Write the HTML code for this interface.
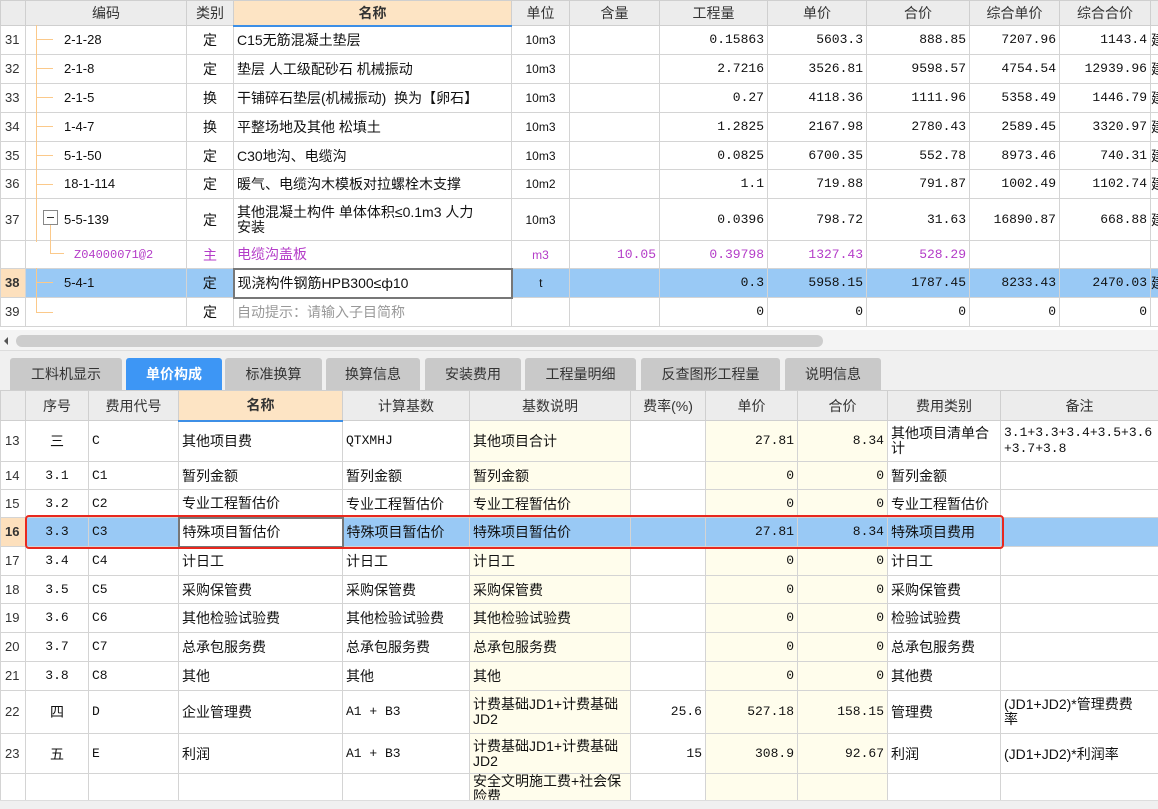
<!DOCTYPE html>
<html><head><meta charset="utf-8"><style>
*{margin:0;padding:0;box-sizing:border-box}
body{width:1158px;height:809px;overflow:hidden;background:#fff;font-family:"Liberation Sans","Noto Sans CJK SC",sans-serif;font-size:14px;color:#111;position:relative}
table{border-collapse:collapse;table-layout:fixed;position:absolute;left:0}
td{border:1px solid #d4d4d4;padding:0 3px;white-space:nowrap;overflow:hidden;vertical-align:middle;line-height:16px}
.h td{background:#ececec;text-align:center;color:#333;border-color:#cfcfcf}
.h td.nm{background:#fde4c4;font-weight:bold;border-bottom:2px solid #3d8fe6}
.n{font-family:"Liberation Mono",monospace;font-size:13px;text-align:right}
.c{text-align:center}
.rn{font-size:13px;color:#333;padding-left:4px}
.sel td{background:#99c9f5}
.sel td.rn{background:#fde0bd;font-weight:bold}
.pur{color:#b43cc8}
.y{background:#fffdec}
.gray{color:#999}
.wrap{white-space:normal;line-height:15px}
.ln{position:absolute;background:#fbc98a;z-index:2}
.tab{position:absolute;top:358px;height:32px;background:#c9c9c9;color:#333;text-align:center;line-height:32px;font-size:14px;border-radius:3px 3px 0 0}
</style></head><body>
<table style="top:0;width:1158px">
<colgroup><col width=25><col width=161><col width=47><col width=278><col width=58><col width=90><col width=108><col width=99><col width=103><col width=90><col width=91><col width=8></colgroup>
<tr class="h" style="height:25px"><td></td><td>编码</td><td>类别</td><td class="nm">名称</td><td>单位</td><td>含量</td><td>工程量</td><td>单价</td><td>合价</td><td>综合单价</td><td>综合合价</td><td></td></tr>
<tr style="height:29px"><td class="rn">31</td><td style="padding-left:38px;font-size:13px">2-1-28</td><td class="c">定</td><td>C15无筋混凝土垫层</td><td class="c" style="font-size:12px">10m3</td><td></td><td class="n">0.15863</td><td class="n">5603.3</td><td class="n">888.85</td><td class="n">7207.96</td><td class="n">1143.4</td><td style="padding:0">建</td></tr>
<tr style="height:29px"><td class="rn">32</td><td style="padding-left:38px;font-size:13px">2-1-8</td><td class="c">定</td><td>垫层 人工级配砂石 机械振动</td><td class="c" style="font-size:12px">10m3</td><td></td><td class="n">2.7216</td><td class="n">3526.81</td><td class="n">9598.57</td><td class="n">4754.54</td><td class="n">12939.96</td><td style="padding:0">建</td></tr>
<tr style="height:29px"><td class="rn">33</td><td style="padding-left:38px;font-size:13px">2-1-5</td><td class="c">换</td><td>干铺碎石垫层(机械振动) &nbsp;换为【卵石】</td><td class="c" style="font-size:12px">10m3</td><td></td><td class="n">0.27</td><td class="n">4118.36</td><td class="n">1111.96</td><td class="n">5358.49</td><td class="n">1446.79</td><td style="padding:0">建</td></tr>
<tr style="height:29px"><td class="rn">34</td><td style="padding-left:38px;font-size:13px">1-4-7</td><td class="c">换</td><td>平整场地及其他 松填土</td><td class="c" style="font-size:12px">10m3</td><td></td><td class="n">1.2825</td><td class="n">2167.98</td><td class="n">2780.43</td><td class="n">2589.45</td><td class="n">3320.97</td><td style="padding:0">建</td></tr>
<tr style="height:28px"><td class="rn">35</td><td style="padding-left:38px;font-size:13px">5-1-50</td><td class="c">定</td><td>C30地沟、电缆沟</td><td class="c" style="font-size:12px">10m3</td><td></td><td class="n">0.0825</td><td class="n">6700.35</td><td class="n">552.78</td><td class="n">8973.46</td><td class="n">740.31</td><td style="padding:0">建</td></tr>
<tr style="height:29px"><td class="rn">36</td><td style="padding-left:38px;font-size:13px">18-1-114</td><td class="c">定</td><td>暖气、电缆沟木模板对拉螺栓木支撑</td><td class="c" style="font-size:12px">10m2</td><td></td><td class="n">1.1</td><td class="n">719.88</td><td class="n">791.87</td><td class="n">1002.49</td><td class="n">1102.74</td><td style="padding:0">建</td></tr>
<tr style="height:42px"><td class="rn">37</td><td style="padding-left:38px;font-size:13px">5-5-139</td><td class="c">定</td><td class="wrap">其他混凝土构件 单体体积≤0.1m3 人力<br>安装</td><td class="c" style="font-size:12px">10m3</td><td></td><td class="n">0.0396</td><td class="n">798.72</td><td class="n">31.63</td><td class="n">16890.87</td><td class="n">668.88</td><td style="padding:0">建</td></tr>
<tr style="height:28px" class="pur"><td></td><td style="padding-left:48px;font-family:'Liberation Mono',monospace;font-size:12px">Z04000071@2</td><td class="c">主</td><td>电缆沟盖板</td><td class="c" style="font-size:12px">m3</td><td class="n">10.05</td><td class="n">0.39798</td><td class="n">1327.43</td><td class="n">528.29</td><td></td><td></td><td></td></tr>
<tr style="height:29px" class="sel"><td class="rn">38</td><td style="padding-left:38px;font-size:13px">5-4-1</td><td class="c">定</td><td style="background:#fff;border:2px solid #777">现浇构件钢筋HPB300≤ф10</td><td class="c" style="font-size:12px">t</td><td></td><td class="n">0.3</td><td class="n">5958.15</td><td class="n">1787.45</td><td class="n">8233.43</td><td class="n">2470.03</td><td style="padding:0">建</td></tr>
<tr style="height:29px"><td class="rn">39</td><td></td><td class="c">定</td><td class="gray">自动提示：请输入子目简称</td><td></td><td></td><td class="n">0</td><td class="n">0</td><td class="n">0</td><td class="n">0</td><td class="n">0</td><td></td></tr>
</table>
<div class="ln" style="left:36px;top:25px;width:1px;height:217px"></div>
<div class="ln" style="left:36px;top:268px;width:1px;height:45px"></div>
<div class="ln" style="left:36px;top:39px;width:17px;height:1px"></div>
<div class="ln" style="left:36px;top:68px;width:17px;height:1px"></div>
<div class="ln" style="left:36px;top:97px;width:17px;height:1px"></div>
<div class="ln" style="left:36px;top:126px;width:17px;height:1px"></div>
<div class="ln" style="left:36px;top:155px;width:17px;height:1px"></div>
<div class="ln" style="left:36px;top:184px;width:17px;height:1px"></div>
<div class="ln" style="left:36px;top:282px;width:17px;height:1px"></div>
<div class="ln" style="left:36px;top:312px;width:17px;height:1px"></div>
<div style="position:absolute;z-index:3;left:43px;top:210px;width:15px;height:15px;border:1px solid #888;background:#fff"><div style="position:absolute;left:3px;top:6px;width:7px;height:1px;background:#333"></div></div>
<div class="ln" style="left:50px;top:225px;width:1px;height:29px"></div>
<div class="ln" style="left:50px;top:253px;width:14px;height:1px"></div>
<div style="position:absolute;left:0;top:330px;width:1158px;height:20px;background:#f4f4f4"></div>
<div style="position:absolute;left:4px;top:337px;width:0;height:0;border-top:4px solid transparent;border-bottom:4px solid transparent;border-right:4px solid #555"></div>
<div style="position:absolute;left:16px;top:335px;width:807px;height:12px;background:#cdcdcd;border-radius:6px"></div>
<div style="position:absolute;left:0;top:350px;width:1158px;height:40px;background:#f0f0f0;border-top:1px solid #ddd"></div>
<div class="tab" style="left:10px;width:112px">工料机显示</div>
<div class="tab" style="left:126px;width:96px;background:#3d96f5;color:#fff;font-weight:bold">单价构成</div>
<div class="tab" style="left:225px;width:97px">标准换算</div>
<div class="tab" style="left:326px;width:94px">换算信息</div>
<div class="tab" style="left:425px;width:96px">安装费用</div>
<div class="tab" style="left:525px;width:111px">工程量明细</div>
<div class="tab" style="left:641px;width:139px">反查图形工程量</div>
<div class="tab" style="left:785px;width:96px">说明信息</div>
<table style="top:390px;width:1158px">
<colgroup><col width=25><col width=63><col width=90><col width=164><col width=127><col width=161><col width=75><col width=92><col width=90><col width=113><col width=158></colgroup>
<tr class="h" style="height:30px"><td></td><td>序号</td><td>费用代号</td><td class="nm">名称</td><td>计算基数</td><td>基数说明</td><td>费率(%)</td><td>单价</td><td>合价</td><td>费用类别</td><td>备注</td></tr>
<tr style="height:41px"><td class="rn">13</td><td class="c">三</td><td class="n" style="text-align:left">C</td><td>其他项目费</td><td class="n" style="text-align:left">QTXMHJ</td><td class="y">其他项目合计</td><td></td><td class="n y">27.81</td><td class="n y">8.34</td><td class="wrap">其他项目清单合<br>计</td><td class="n" style="text-align:left;line-height:16px">3.1+3.3+3.4+3.5+3.6<br>+3.7+3.8</td></tr>
<tr style="height:28px"><td class="rn">14</td><td class="n" style="text-align:center">3.1</td><td class="n" style="text-align:left">C1</td><td>暂列金额</td><td>暂列金额</td><td class="y">暂列金额</td><td></td><td class="n y">0</td><td class="n y">0</td><td>暂列金额</td><td></td></tr>
<tr style="height:28px"><td class="rn">15</td><td class="n" style="text-align:center">3.2</td><td class="n" style="text-align:left">C2</td><td>专业工程暂估价</td><td>专业工程暂估价</td><td class="y">专业工程暂估价</td><td></td><td class="n y">0</td><td class="n y">0</td><td>专业工程暂估价</td><td></td></tr>
<tr style="height:29px" class="sel"><td class="rn">16</td><td class="n" style="text-align:center">3.3</td><td class="n" style="text-align:left">C3</td><td style="background:#fff;border:2px solid #777">特殊项目暂估价</td><td>特殊项目暂估价</td><td>特殊项目暂估价</td><td></td><td class="n">27.81</td><td class="n">8.34</td><td>特殊项目费用</td><td></td></tr>
<tr style="height:29px"><td class="rn">17</td><td class="n" style="text-align:center">3.4</td><td class="n" style="text-align:left">C4</td><td>计日工</td><td>计日工</td><td class="y">计日工</td><td></td><td class="n y">0</td><td class="n y">0</td><td>计日工</td><td></td></tr>
<tr style="height:28px"><td class="rn">18</td><td class="n" style="text-align:center">3.5</td><td class="n" style="text-align:left">C5</td><td>采购保管费</td><td>采购保管费</td><td class="y">采购保管费</td><td></td><td class="n y">0</td><td class="n y">0</td><td>采购保管费</td><td></td></tr>
<tr style="height:29px"><td class="rn">19</td><td class="n" style="text-align:center">3.6</td><td class="n" style="text-align:left">C6</td><td>其他检验试验费</td><td>其他检验试验费</td><td class="y">其他检验试验费</td><td></td><td class="n y">0</td><td class="n y">0</td><td>检验试验费</td><td></td></tr>
<tr style="height:29px"><td class="rn">20</td><td class="n" style="text-align:center">3.7</td><td class="n" style="text-align:left">C7</td><td>总承包服务费</td><td>总承包服务费</td><td class="y">总承包服务费</td><td></td><td class="n y">0</td><td class="n y">0</td><td>总承包服务费</td><td></td></tr>
<tr style="height:29px"><td class="rn">21</td><td class="n" style="text-align:center">3.8</td><td class="n" style="text-align:left">C8</td><td>其他</td><td>其他</td><td class="y">其他</td><td></td><td class="n y">0</td><td class="n y">0</td><td>其他费</td><td></td></tr>
<tr style="height:43px"><td class="rn">22</td><td class="c">四</td><td class="n" style="text-align:left">D</td><td>企业管理费</td><td class="n" style="text-align:left">A1 + B3</td><td class="y wrap">计费基础JD1+计费基础JD2</td><td class="n">25.6</td><td class="n y">527.18</td><td class="n y">158.15</td><td>管理费</td><td class="wrap">(JD1+JD2)*管理费费<br>率</td></tr>
<tr style="height:40px"><td class="rn">23</td><td class="c">五</td><td class="n" style="text-align:left">E</td><td>利润</td><td class="n" style="text-align:left">A1 + B3</td><td class="y wrap">计费基础JD1+计费基础JD2</td><td class="n">15</td><td class="n y">308.9</td><td class="n y">92.67</td><td>利润</td><td>(JD1+JD2)*利润率</td></tr>
<tr style="height:30px"><td></td><td></td><td></td><td></td><td></td><td class="y wrap" style="vertical-align:top">安全文明施工费+社会保险费</td><td></td><td class="y"></td><td class="y"></td><td></td><td></td></tr>
</table>
<div style="position:absolute;left:0;top:800px;width:1158px;height:9px;background:#f0f0f0;border-top:1px solid #ddd"></div>
<div style="position:absolute;left:25px;top:515px;width:979px;height:34px;border:2.5px solid #e8281e;border-radius:4px"></div>
</body></html>
